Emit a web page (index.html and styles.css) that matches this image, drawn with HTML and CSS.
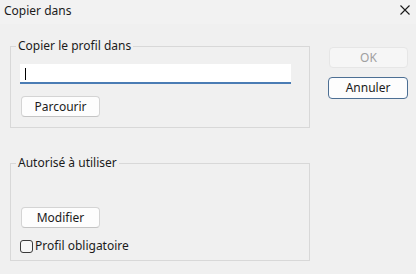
FILE: index.html
```html
<!DOCTYPE html>
<html lang="fr">
<head>
<meta charset="utf-8">
<title>Copier dans</title>
<link rel="stylesheet" href="styles.css">
</head>
<body>
<div class="dialog">
  <div class="titlebar">
    <span class="title">Copier dans</span>
    <svg class="close" width="10" height="10" viewBox="0 0 10 10" aria-hidden="true">
      <path d="M0.5 0.5 L9.5 9.5 M9.5 0.5 L0.5 9.5" stroke="#1a1a1a" stroke-width="1.1" fill="none"/>
    </svg>
  </div>
  <div class="main">
    <div class="groups">
      <fieldset class="group group-copy">
        <legend>Copier le profil dans</legend>
        <div class="field"><span class="caret"></span></div>
        <button class="btn">Parcourir</button>
      </fieldset>
      <fieldset class="group group-auth">
        <legend>Autorisé à utiliser</legend>
        <button class="btn btn-modify">Modifier</button>
        <label class="check-row"><span class="checkbox"></span><span>Profil obligatoire</span></label>
      </fieldset>
    </div>
    <div class="actions">
      <button class="btn btn-ok" disabled>OK</button>
      <button class="btn btn-cancel">Annuler</button>
    </div>
  </div>
</div>
</body>
</html>
```
FILE: styles.css
```css
* { box-sizing: border-box; }
html, body {
  margin: 0;
  padding: 0;
  width: 416px;
  height: 274px;
  overflow: hidden;
  background: #f0f0f0;
  font-family: "Noto Sans", "Open Sans", sans-serif;
  font-size: 12px;
  line-height: 16px;
  color: #1b1b1b;
}
.dialog { width: 416px; height: 274px; }
.titlebar {
  height: 24px;
  display: flex;
  justify-content: space-between;
  align-items: flex-start;
  padding: 3px 6px 0 4px;
  background: #f2f2f2;
}
.close { margin-top: 2px; }
.main {
  display: flex;
  padding-top: 14px;
}
.groups {
  margin-left: 10px;
  width: 300px;
  display: flex;
  flex-direction: column;
}
.group {
  margin: 0;
  border: 1px solid #d8d8d8;
  padding: 0 0 0 5px;
  min-width: 0;
}
.group legend {
  padding: 0 2px;
  line-height: 16px;
}
.group-copy { padding-bottom: 10px; }
.group-auth { margin-top: 27px; padding-bottom: 6px; }
.field {
  margin: 10px 0 0 4px;
  width: 271px;
  height: 20px;
  background: #fff;
  border-bottom: 2px solid #4a7cb4;
  padding: 4px 0 0 5px;
}
.caret {
  display: block;
  width: 1px;
  height: 12px;
  background: #000;
}
.btn {
  font: inherit;
  color: #1b1b1b;
  background: #fdfdfd;
  border: 1px solid #d4d4d4;
  border-bottom-color: #c4c4c4;
  border-radius: 4px;
  height: 21px;
  width: 79px;
  padding: 0;
  display: block;
}
.group .btn { margin: 12px 0 0 5px; }
.group .btn-modify { margin-top: 36px; }
.check-row {
  display: flex;
  align-items: center;
  gap: 2px;
  margin: 10px 0 0 4px;
  height: 16px;
}
.checkbox {
  width: 13px;
  height: 13px;
  border: 1px solid #3a3a3a;
  border-radius: 3px;
  background: #f6f6f6;
}
.actions {
  margin-left: 18px;
  padding-top: 9px;
  display: flex;
  flex-direction: column;
  width: 80px;
}
.btn-ok {
  margin-left: 1px;
  color: #a0a0a0;
  background: #f6f6f6;
  border-color: #e6e6e6;
}
.btn-cancel {
  margin-top: 9px;
  width: 80px;
  height: 22px;
  border: 1px solid #4d6f93;
  box-shadow: inset 0 0 0 1px #fafcff;
}
```
